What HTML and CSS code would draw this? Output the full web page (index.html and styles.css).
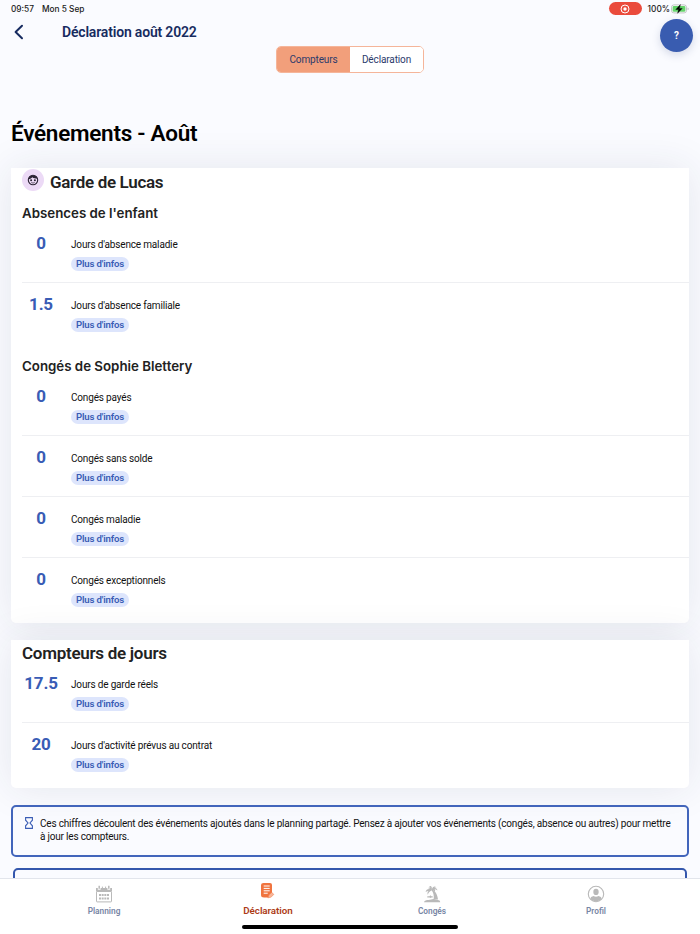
FILE: index.html
```
<!DOCTYPE html>
<html lang="fr">
<head>
    <meta charset="utf-8">
    <title>Déclaration août 2022</title>
    <link rel="stylesheet" href="styles.css">
</head>
<body>
    <div class="status-bar">
        <span class="time">09:57</span>
        <span class="date">Mon 5 Sep</span>
        <span class="recording">
            <svg width="10" height="10" viewBox="0 0 10 10"><circle cx="5" cy="5" r="4" fill="none" stroke="#fff" stroke-width="1"/><circle cx="5" cy="5" r="1.7" fill="#fff"/></svg>
        </span>
        <span class="percent">100%</span>
        <svg class="battery" width="18" height="10" viewBox="0 0 18 10">
            <rect x=".5" y=".9" width="15" height="8" rx="2.4" fill="#fff" stroke="#b3b5b8" stroke-width=".8"/>
            <rect x="1.6" y="2" width="12.8" height="5.8" rx="1.4" fill="#65d36b"/>
            <path d="M16.6 3.6v2.6q1-.4 1-1.3t-1-1.3z" fill="#b3b5b8"/>
            <path d="M9.4.6 4.8 5.5h2.8L6.6 9.3l4.6-4.9H8.4z" fill="#000" stroke="#000" stroke-width=".4"/>
        </svg>
    </div>

    <header class="header">
        <svg class="back" width="10" height="16" viewBox="0 0 10 16"><path d="M8 1.800 1.600 8l6.400 6.200" fill="none" stroke="#172b60" stroke-width="2" stroke-linecap="round" stroke-linejoin="round"/></svg>
        <h1>Déclaration août 2022</h1>
        <button class="help">?</button>
    </header>

    <div class="tabs">
        <button class="tab active">Compteurs</button>
        <button class="tab">Déclaration</button>
    </div>

    <main>
        <h2 class="page-title">Événements - Août</h2>

        <section class="card">
            <div class="card-title">
                <span class="avatar">
                    <svg width="12" height="12" viewBox="0 0 12 12">
                        <circle cx="6" cy="6" r="4.700" fill="none" stroke="#2b2334" stroke-width="1.1"/>
                        <path d="M1.500 5.200C3.500 5 4.500 4.300 5.200 3.300 6.500 4.300 8.500 4.700 10.500 4.800 10 2.500 8.300 1.300 6 1.300S2 2.700 1.500 5.200z" fill="#2b2334"/>
                        <circle cx="4.100" cy="6.300" r="1" fill="#2b2334"/>
                        <circle cx="7.900" cy="6.300" r="1" fill="#2b2334"/>
                        <path d="M4.300 8.500q1.700 1.200 3.400 0" fill="none" stroke="#2b2334" stroke-width=".7"/>
                    </svg>
                </span>
                <h2>Garde de Lucas</h2>
            </div>

            <h3>Absences de l'enfant</h3>
            <div class="row">
                <div class="count">0</div>
                <div class="info"><p>Jours d'absence maladie</p><span class="more">Plus d'infos</span></div>
            </div>
            <div class="row">
                <div class="count">1.5</div>
                <div class="info"><p>Jours d'absence familiale</p><span class="more">Plus d'infos</span></div>
            </div>

            <h3 class="second">Congés de Sophie Blettery</h3>
            <div class="row">
                <div class="count">0</div>
                <div class="info"><p>Congés payés</p><span class="more">Plus d'infos</span></div>
            </div>
            <div class="row">
                <div class="count">0</div>
                <div class="info"><p>Congés sans solde</p><span class="more">Plus d'infos</span></div>
            </div>
            <div class="row">
                <div class="count">0</div>
                <div class="info"><p>Congés maladie</p><span class="more">Plus d'infos</span></div>
            </div>
            <div class="row">
                <div class="count">0</div>
                <div class="info"><p>Congés exceptionnels</p><span class="more">Plus d'infos</span></div>
            </div>
        </section>

        <section class="card">
            <h2 class="counter-title">Compteurs de jours</h2>
            <div class="row">
                <div class="count">17.5</div>
                <div class="info"><p>Jours de garde réels</p><span class="more">Plus d'infos</span></div>
            </div>
            <div class="row">
                <div class="count">20</div>
                <div class="info"><p>Jours d'activité prévus au contrat</p><span class="more">Plus d'infos</span></div>
            </div>
        </section>

        <div class="notice">
            <svg width="8" height="12" viewBox="0 0 8 12"><path d="M.6.600h6.800v2.600L5 6l2.400 2.800v2.600H.6V8.800L3 6 .6 3.200z" fill="none" stroke="#3a5db5" stroke-width="1.100"/></svg>
            <p>Ces chiffres découlent des événements ajoutés dans le planning partagé. Pensez à ajouter vos événements (congés, absence ou autres) pour mettre à jour les compteurs.</p>
        </div>
        <div class="next-panel"></div>
    </main>

    <nav class="bottom-nav">
        <a class="nav-item">
            <svg width="18" height="18" viewBox="0 0 18 18">
                <path d="M1 3h1.800v1.800h2.800V3h6.800v1.800h2.800V3H17v3.500H1z" fill="#b9b9b9"/>
                <path d="M4.200.8v3M13.800.8v3" stroke="#b9b9b9" stroke-width="1.500"/>
                <path d="M7.400 1.600v2.400M10.600 1.600v2.400" stroke="#b9b9b9" stroke-width="1"/>
                <rect x="1.500" y="6.500" width="15" height="10.400" rx=".6" fill="#fff" stroke="#b9b9b9"/>
                <path d="M4 10h10M4 13.500h10" stroke="#b9b9b9" stroke-width="2" stroke-dasharray="2 .67"/>
            </svg>
            <span>Planning</span>
        </a>
        <a class="nav-item active">
            <svg width="18" height="18" viewBox="0 0 18 18">
                <path d="M4.500 1h6.500q2 0 2 2v8.200L9.500 15.500H5q-3 0-3-2.500V3q0-2 2.500-2z" fill="#f0743f"/>
                <path d="M4.700 4h6M4.700 6.400h6M4.700 8.800h6M4.700 11.200h4" stroke="#fff" stroke-width="1"/>
                <path d="m8.800 15.800 1.200-3 2.800-2.500 2 2.200-3 2.800z" fill="#f7b497" stroke="#f0743f" stroke-width=".5"/>
            </svg>
            <span>Déclaration</span>
        </a>
        <a class="nav-item">
            <svg width="18" height="18" viewBox="0 0 18 18" fill="#b9b9b9">
                <path d="M1 17.200c.4-2 2.500-2.300 4.500-2.300 2.200 0 3-.8 5-.8s2.200.8 4.300.8c1.500 0 2.300.9 2.400 2.300z"/>
                <path d="M8.900 4.200c3.600 1.600 5.700 5.800 6.100 10.200h-4.400C11.200 10.800 10.500 7.500 8.400 5z"/>
                <path d="M8.800 4.500C8 2.200 6.300 2 4.800 3.200 6 3.200 6.500 3.500 7 4 4.600 3.600 3 4.800 2.600 7c1-.8 2-1 3-1C4.400 7 4.200 8.500 4.800 9.800 5.200 8 6.500 6.500 8.800 5.300c1.500-.3 2.400.2 3 1.700.6-1 .4-2-.3-2.700 1 0 2 .4 2.900 1.300C14.300 3.700 13 2.700 11 3.200c.6-.7 1.400-1 2.400-1C11.600.7 9.500 1.500 8.800 4.500z"/>
                <path d="M4.300 11.300h2.200l.9-1 1 1h1.300v1.100H8.300l-.8.700-.9-.7H4.300z"/>
                <path d="M6.200 1.200 8 1l1.400 2.800H8z"/>
            </svg>
            <span>Congés</span>
        </a>
        <a class="nav-item">
            <svg width="18" height="18" viewBox="0 0 18 18">
                <clipPath id="ring"><circle cx="9" cy="9" r="7.300"/></clipPath>
                <circle cx="9" cy="9" r="7.700" fill="none" stroke="#b9b9b9" stroke-width="1.100"/>
                <ellipse cx="9" cy="6.900" rx="2.700" ry="3.100" fill="#b9b9b9"/>
                <path d="M3 17v-3q.5-2.500 3.500-3 2.500 1.300 5 0 3 .5 3.500 3v3z" fill="#b9b9b9" clip-path="url(#ring)"/>
            </svg>
            <span>Profil</span>
        </a>
        <div class="home-indicator"></div>
    </nav>
</body>
</html>
```
FILE: styles.css
```
* {
    box-sizing: border-box;
}
body {
    font-family: Roboto, "Liberation Sans", sans-serif;
    margin: 0;
    height: 934px;
    overflow: hidden;
    background: #fafbff;
    color: #111;
    display: flex;
    flex-direction: column;
}
h1, h2, h3, p {
    margin: 0;
}
button {
    font-family: inherit;
    border: none;
    padding: 0;
    cursor: pointer;
}
.status-bar {
    height: 17px;
    flex: none;
    display: flex;
    align-items: center;
    padding: 0 11px 0 11px;
    font-family: Inter, sans-serif;
    font-size: 8.3px;
    font-weight: 500;
    color: #1a1a1a;
}
.date {
    margin-left: 8px;
}
.recording {
    margin-left: auto;
    width: 33px;
    height: 13px;
    border-radius: 7px;
    background: #ea4b3c;
    display: flex;
    align-items: center;
    justify-content: center;
}
.percent {
    margin: 0 1px 0 6px;
}
.header {
    height: 29px;
    flex: none;
    display: flex;
    padding: 0 7px 0 14px;
}
.back {
    margin-top: 7px;
}
.header h1 {
    margin: 6px auto 0 38px;
    font-size: 14px;
    line-height: 18px;
    font-weight: 600;
    letter-spacing: -.18px;
    color: #172b60;
}
.help {
    width: 33px;
    height: 33px;
    margin-top: 2px;
    border-radius: 50%;
    background: #395cb0;
    color: #fff;
    font-size: 10px;
    font-weight: 700;
    box-shadow: 0 3px 9px rgba(40, 60, 120, .18);
}
.tabs {
    flex: none;
    width: 148px;
    height: 27px;
    margin: 0 auto;
    display: flex;
    border: 1px solid #f5b59a;
    border-radius: 5px;
    background: #fff;
    overflow: hidden;
}
.tab {
    flex: 1;
    background: #fff;
    color: #2b3a6b;
    font-size: 10px;
    letter-spacing: -.12px;
}
.tab.active {
    background: #f29f7b;
}
main {
    flex: 1;
    min-height: 0;
    overflow: hidden;
    padding: 47px 11px 0;
}
.page-title {
    height: 48px;
    line-height: 27px;
    font-size: 22.5px;
    font-weight: 600;
    letter-spacing: -.27px;
    color: #000;
}
.card {
    background: #fff;
    border-radius: 0 0 5px 5px;
    padding: 0 0 5px 11px;
    margin-bottom: 17px;
    box-shadow: 0 0 40px rgba(40, 45, 80, .1);
}
.card-title {
    height: 28px;
    display: flex;
}
.avatar {
    width: 22px;
    height: 22px;
    margin: 1px 6px 0 0;
    border-radius: 50%;
    background: #ecdaf6;
    display: flex;
    align-items: center;
    justify-content: center;
}
.card h2 {
    font-size: 17px;
    line-height: 28px;
    font-weight: 600;
    letter-spacing: -.33px;
    color: #222;
}
.card .counter-title {
    height: 21px;
    line-height: 27px;
    letter-spacing: -.28px;
}
.card h3 {
    margin-top: 8px;
    font-family: Inter, sans-serif;
    font-size: 13.3px;
    line-height: 18px;
    height: 17px;
    font-weight: 600;
    color: #222;
}
.card h3.second {
    margin-top: 14px;
}
.row {
    height: 61px;
    display: flex;
    padding-top: 13px;
}
.row + .row {
    border-top: 1px solid #eeeff2;
    padding-top: 12px;
}
.count {
    width: 38px;
    margin-right: 11px;
    text-align: center;
    font-size: 17px;
    line-height: 19px;
    font-weight: 700;
    letter-spacing: -.2px;
    color: #395cb5;
}
.info p {
    font-size: 10px;
    line-height: 22px;
    letter-spacing: -.17px;
}
.more {
    display: block;
    width: 58px;
    height: 14px;
    margin-top: 1px;
    border-radius: 7px;
    background: #dde5fc;
    color: #395cb5;
    font-size: 9.6px;
    letter-spacing: -.15px;
    line-height: 14px;
    font-weight: 600;
    text-align: center;
}
.notice {
    height: 52px;
    display: flex;
    gap: 7px;
    padding: 9.5px 12px 0;
    border: 2px solid #4265bb;
    border-radius: 5px;
    font-size: 10px;
    letter-spacing: -.195px;
    line-height: 13.5px;
}
.notice svg {
    flex: none;
}
.next-panel {
    height: 60px;
    margin: 11px 2px 0;
    border: 2px solid #3457ad;
    border-radius: 5px;
}
.bottom-nav {
    position: relative;
    flex: none;
    height: 56px;
    display: grid;
    grid-template-columns: repeat(4, 1fr);
    padding: 0 22px;
    border-top: 1px solid #e2e5ec;
    background: #fff;
}
.nav-item {
    display: flex;
    flex-direction: column;
    align-items: center;
    padding-top: 6px;
    font-size: 8.3px;
    line-height: 14px;
    font-weight: 600;
    color: #7886a5;
}
.nav-item span {
    margin-top: 1px;
}
.nav-item.active {
    padding-top: 3px;
    font-size: 9.8px;
    letter-spacing: -.06px;
    color: #ad3b16;
}
.nav-item.active span {
    margin-top: 4px;
}
.home-indicator {
    position: absolute;
    left: 242px;
    bottom: 5px;
    width: 216px;
    height: 4px;
    border-radius: 2px;
    background: #000;
}
```
